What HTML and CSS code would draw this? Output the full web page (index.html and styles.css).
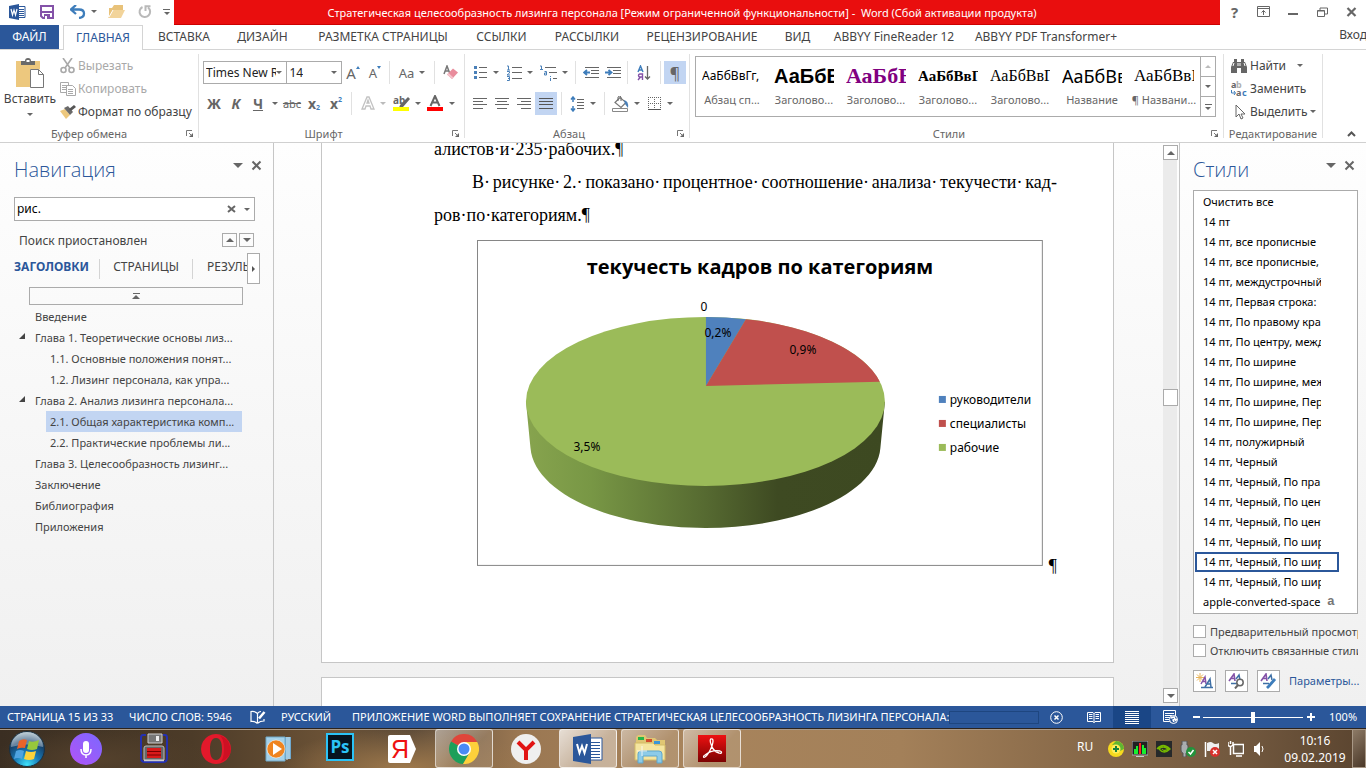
FILE: index.html
```html
<!DOCTYPE html>
<html lang="ru">
<head>
<meta charset="utf-8">
<title>Word</title>
<link rel="stylesheet" href="styles.css">
</head>
<body>
<header class="titlebar">
  <div class="qat">
    <button class="q-word" aria-label="Word"><svg width="17" height="16" viewBox="0 0 17 16"><path d="M9 2.500h7v11H9z" fill="#fff" stroke="#2b579a"/><path d="M10 5.500h5M10 7.500h5M10 9.500h5M10 11.500h5" stroke="#2b579a"/><path d="M0 2l10-2v16L0 14z" fill="#2b579a"/><path d="M2 5l1.500 6L5 6l1.500 5L8 5" fill="none" stroke="#fff" stroke-width="1.200"/></svg></button>
    <button class="q-save" aria-label="Сохранить"><svg width="14" height="14" viewBox="0 0 14 14"><path d="M1 1h12v12H3l-2-2z" fill="#fff" stroke="#8452a8" stroke-width="2"/><path d="M1 7h12" stroke="#8452a8" stroke-width="2"/><path d="M4 9h6v5H4z" fill="#8452a8"/><path d="M5 11h2v3H5z" fill="#fff"/></svg></button>
    <button class="q-undo" aria-label="Отменить"><svg width="16" height="14" viewBox="0 0 16 14"><path d="M6 0L1 4.500 6 9M1.500 4.500H9q5 0 5 4t-5 4.500" fill="none" stroke="#3e7dbb" stroke-width="2.300"/></svg><i class="caret"></i></button>
    <button class="q-open" aria-label="Открыть"><svg width="17" height="13" viewBox="0 0 17 13"><path d="M1 12V3h3l2-3h9v5H6z" fill="#e8c27a"/><path d="M5 5h12l-4 8H0z" fill="#f2d49b"/><path d="M5 5L1 12" stroke="#fff"/></svg></button>
    <button class="q-redo" aria-label="Повторить"><svg width="14" height="14" viewBox="0 0 14 14"><path d="M4.500 2A5.300 5.300 0 1 0 10 2.500M7.500 6V1.200h5" fill="none" stroke="#b9b9b9" stroke-width="2"/></svg></button>
    <button class="q-more" aria-label="Настройка панели"><i class="bar"></i><i class="caret"></i></button>
  </div>
  <h1 class="title">Стратегическая целесообразность лизинга персонала [Режим ограниченной функциональности] -&nbsp; Word (Сбой активации продукта)</h1>
  <div class="winbtns">
    <button class="help" aria-label="Справка">?</button>
    <button aria-label="Параметры ленты"><svg width="13" height="11" viewBox="0 0 13 11"><path d="M.5.500h12v10H.5zM.5 2.500h12" fill="none" stroke="#666"/><path d="M6.500 9V4.500M4.500 6.500l2-2 2 2" fill="none" stroke="#666"/></svg></button>
    <button aria-label="Свернуть"><svg width="10" height="11" viewBox="0 0 10 11"><path d="M0 7h10v2H0z" fill="#666"/></svg></button>
    <button aria-label="Восстановить"><svg width="11" height="10" viewBox="0 0 11 10"><path d="M3 3V1h7.500v6H8M.5 3.500h7v6h-7zM.5 4h7" fill="none" stroke="#666"/></svg></button>
    <button aria-label="Закрыть"><svg width="11" height="10" viewBox="0 0 11 10"><path d="M1.500 1l8 8M9.500 1l-8 8" stroke="#666" stroke-width="2.200"/></svg></button>
  </div>
</header>
<nav class="tabs">
  <button class="file">ФАЙЛ</button><button class="active">ГЛАВНАЯ</button><button>ВСТАВКА</button><button>ДИЗАЙН</button><button>РАЗМЕТКА СТРАНИЦЫ</button><button>ССЫЛКИ</button><button>РАССЫЛКИ</button><button>РЕЦЕНЗИРОВАНИЕ</button><button>ВИД</button><button>ABBYY FineReader 12</button><button>ABBYY PDF Transformer+</button><button class="login">Вход</button>
</nav>
<section class="ribbon">
  <div class="group g-clip">
    <div class="body">
      <button class="paste"><svg width="29" height="30" viewBox="0 0 29 30"><path d="M0 3h24v26H0z" fill="#edc87e"/><path d="M5 7V3h4q0-3 3-3t3 3h4v4z" fill="#6a6a6a"/><path d="M10.500 2h3v2h-3z" fill="#fff"/><path d="M14 11h9l6 6v13H14z" fill="#fff"/><path d="M14.500 11.500h8l5 5v13h-13zM22.500 11.500v5h5" fill="#fff" stroke="#777"/></svg><span>Вставить</span><i class="caret"></i></button>
      <div class="stack">
        <button class="off"><svg width="16" height="16" viewBox="0 0 16 16"><g fill="none" stroke="#a9a9a9" stroke-width="1.600"><path d="M3 0l7 10M12 0L5 10"/><circle cx="3.500" cy="12" r="2.500"/><circle cx="11.500" cy="12" r="2.500"/></g></svg>Вырезать</button>
        <button class="off"><svg width="16" height="16" viewBox="0 0 16 16"><g fill="#fff" stroke="#a9a9a9"><path d="M.5 1.500h8v10h-8zM2 4.500h5M2 6.500h5M2 8.500h5"/><path d="M6.500 4.500h6l3 3v7h-9zM8 8.500h5M8 10.500h5M8 12.500h5"/></g></svg>Копировать</button>
        <button><svg width="16" height="16" viewBox="0 0 16 16"><path d="M0 7l5-2 5 6-4 4z" fill="#edc87e"/><path d="M4 4l4-2 5 6-3 3z" fill="#6a6a6a"/><path d="M9 5l5-4 2 2-5 4z" fill="#555"/></svg>Формат по образцу</button>
      </div>
    </div>
    <div class="label"><span>Буфер обмена</span><button class="launch" aria-label="Буфер обмена"><svg width="8" height="8" viewBox="0 0 8 8"><path d="M.5 6V.500H6" fill="none" stroke="#777"/><path d="M7 3v4H3z" fill="#666"/><path d="M3 3l3 3" stroke="#777"/></svg></button></div>
  </div>
  <div class="group g-font">
    <div class="body rows">
      <div class="row">
        <button class="combo name" aria-label="Шрифт"><span>Times New Roman</span><i class="caret"></i></button>
        <button class="combo size" aria-label="Размер"><span>14</span><i class="caret"></i></button>
        <button class="ib" aria-label="Увеличить размер"><span class="grow">A</span><i class="tri up"></i></button>
        <button class="ib" aria-label="Уменьшить размер"><span class="shrink">A</span><i class="tri"></i></button>
        <i class="sep"></i>
        <button class="ib w38" aria-label="Регистр"><span class="aa">Aa</span><i class="caret"></i></button>
        <i class="sep"></i>
        <button class="ib w26" aria-label="Очистить формат"><svg width="16" height="15" viewBox="0 0 16 15"><path d="M1 9l3-8 3 8M2 6h4" fill="none" stroke="#777" stroke-width="1.500"/><path d="M4 9.500l6-6 5 4-6 6.500z" fill="#e98c9c"/><path d="M4 9.500l1.500-1.500 5 4.500L9 14z" fill="#f4c3cb"/></svg></button>
      </div>
      <div class="row r2">
        <button class="ib bold">Ж</button><button class="ib bold ital">К</button><button class="ib bold under">Ч</button><button class="ib w12" aria-label="Подчеркивание"><i class="caret"></i></button>
        <button class="ib strike">abc</button><button class="ib bold">x<sub>2</sub></button><button class="ib bold">x<sup>2</sup></button>
        <i class="sep sp4"></i>
        <button class="ib w34" aria-label="Эффекты"><svg width="14" height="15" viewBox="0 0 14 15"><path d="M1 13L6 1h2l5 12h-3L9 10H5l-1 3zM6 7h2L7 4z" fill="#fff" stroke="#c2c2c2" stroke-width="1.300"/></svg><i class="caret pale"></i></button>
        <button class="ib w34" aria-label="Выделение"><svg width="17" height="17" viewBox="0 0 17 17"><text x="0" y="9" class="ab">ab</text><path d="M15 2l2 2-7 8-4 1 1-3z" fill="#666"/><path d="M0 12h16v4H0z" fill="#ff0"/></svg><i class="caret"></i></button>
        <button class="ib w34" aria-label="Цвет текста"><svg width="17" height="17" viewBox="0 0 17 17"><path d="M3.500 11L8 1l4.500 10M5 7.500h6" fill="none" stroke="#666" stroke-width="2"/><path d="M0 12h16v4H0z" fill="#f00"/></svg><i class="caret"></i></button>
      </div>
    </div>
    <div class="label"><span>Шрифт</span><button class="launch" aria-label="Шрифт"><svg width="8" height="8" viewBox="0 0 8 8"><path d="M.5 6V.500H6" fill="none" stroke="#777"/><path d="M7 3v4H3z" fill="#666"/><path d="M3 3l3 3" stroke="#777"/></svg></button></div>
  </div>
  <div class="group g-par">
    <div class="body rows">
      <div class="row">
        <button class="ib w34" aria-label="Маркеры"><svg width="14" height="15" viewBox="0 0 14 15"><path d="M5 2.500h8M5 7.500h8M5 12.500h8" stroke="#666"/><path d="M0 1h3v3H0zM0 6h3v3H0zM0 11h3v3H0z" fill="#4a80b8"/></svg><i class="caret"></i></button>
        <button class="ib w34" aria-label="Нумерация"><svg width="15" height="16" viewBox="0 0 15 16"><path d="M5 2.500h10M5 7.500h10M5 13.500h10" stroke="#666"/><path d="M0 1h1.500v4M0 5h3M0 6.500h2.500v1.500L0 10h3M0 11.500h2.500v4H0M1 13.500h1" fill="none" stroke="#4a80b8"/></svg><i class="caret"></i></button>
        <button class="ib w34" aria-label="Многоуровневый список"><svg width="17" height="16" viewBox="0 0 17 16"><path d="M5 2.500h11M9 7.500h8M13 13.500h4" stroke="#666"/><path d="M0 1h1.500v4M0 4.500h3M4.500 6.500h2v3.500h-2v-2h2M10.500 11v1M10.500 13v3" fill="none" stroke="#4a80b8"/></svg><i class="caret"></i></button>
        <i class="sep sp4"></i>
        <button class="ib" aria-label="Уменьшить отступ"><svg width="16" height="12" viewBox="0 0 16 12"><path d="M2 .5h14M8 3.500h8M8 6.500h8M2 10.500h14" stroke="#666"/><path d="M7 5.500H2M4 3L1 5.500 4 8" fill="none" stroke="#3e7dbb" stroke-width="1.800"/></svg></button>
        <button class="ib" aria-label="Увеличить отступ"><svg width="16" height="12" viewBox="0 0 16 12"><path d="M2 .5h14M8 3.500h8M8 6.500h8M2 10.500h14" stroke="#666"/><path d="M0 5.500h5M3.500 3l3 2.500-3 2.500" fill="none" stroke="#3e7dbb" stroke-width="1.800"/></svg></button>
        <i class="sep"></i>
        <button class="ib w26" aria-label="Сортировка"><svg width="14" height="16" viewBox="0 0 14 16"><path d="M1 7l2.500-6L6 7M2 5h3" fill="none" stroke="#3e7dbb" stroke-width="1.400"/><path d="M5.500 15V9H3q-1.500 0-1.500 1.500T3 12h2.500M3.500 12L1 15" fill="none" stroke="#8452a8" stroke-width="1.400"/><path d="M10.500 1v13M8 11.500l2.500 2.500 2.500-2.500" fill="none" stroke="#666" stroke-width="1.300"/></svg></button>
        <i class="sep"></i>
        <button class="ib on pil" aria-label="Знаки">¶</button>
      </div>
      <div class="row r2">
        <button class="ib" aria-label="По левому краю"><svg width="15" height="12" viewBox="0 0 15 12"><path d="M0 .5h14M0 3.500h10M0 6.500h14M0 10.500h10" stroke="#666"/></svg></button>
        <button class="ib" aria-label="По центру"><svg width="15" height="12" viewBox="0 0 15 12"><path d="M0 .5h14M2 3.500h10M0 6.500h14M2 10.500h10" stroke="#666"/></svg></button>
        <button class="ib" aria-label="По правому краю"><svg width="15" height="12" viewBox="0 0 15 12"><path d="M0 .5h14M4 3.500h10M0 6.500h14M4 10.500h10" stroke="#666"/></svg></button>
        <button class="ib on" aria-label="По ширине"><svg width="15" height="12" viewBox="0 0 15 12"><path d="M0 .5h14M0 3.500h14M0 6.500h14M0 10.500h14" stroke="#555"/></svg></button>
        <i class="sep sp4"></i>
        <button class="ib w34" aria-label="Интервал"><svg width="15" height="16" viewBox="0 0 15 16"><path d="M7 3.500h7M7 6.500h7M7 9.500h7M7 12.500h7" stroke="#666"/><path d="M3 1v5M1 3.500L3 1l2 2.500M3 15v-5M1 12.500L3 15l2-2.500" fill="none" stroke="#3e7dbb" stroke-width="1.500"/></svg><i class="caret"></i></button>
        <i class="sep sp4"></i>
        <button class="ib w34" aria-label="Заливка"><svg width="17" height="16" viewBox="0 0 17 16"><path d="M.5 12.500h15v3H.5z" fill="#fff" stroke="#888"/><path d="M3 6.500l5-5 6 5-5 5z" fill="#fff" stroke="#777" stroke-width="1.200"/><path d="M6 5V1q2-2 3 0v4" fill="none" stroke="#666"/><path d="M12 4q5 1 4 8l-3-4z" fill="#4a80b8"/></svg><i class="caret"></i></button>
        <button class="ib w34" aria-label="Границы"><svg width="14" height="14" viewBox="0 0 14 14"><path d="M.5 0v13M12.500 0v13M6.500 0v13M0 .5h13M0 6.500h13" fill="none" stroke="#666" stroke-dasharray="1 1"/><path d="M0 12.500h13" stroke="#555"/></svg><i class="caret"></i></button>
      </div>
    </div>
    <div class="label"><span>Абзац</span><button class="launch" aria-label="Абзац"><svg width="8" height="8" viewBox="0 0 8 8"><path d="M.5 6V.500H6" fill="none" stroke="#777"/><path d="M7 3v4H3z" fill="#666"/><path d="M3 3l3 3" stroke="#777"/></svg></button></div>
  </div>
  <div class="group g-styles">
    <div class="body">
      <div class="gallery">
        <button><b class="s1">АаБбВвГг,</b><span>Абзац сп...</span></button>
        <button><b class="s2">АаБбВ</b><span>Заголово...</span></button>
        <button><b class="s3">АаБбВ</b><span>Заголово...</span></button>
        <button><b class="s4">АаБбВвГ</b><span>Заголово...</span></button>
        <button><b class="s5">АаБбВвГ</b><span>Заголово...</span></button>
        <button><b class="s6">АаБбВв</b><span>Название</span></button>
        <button><b class="s7">АаБбВвГ</b><span>¶ Названи...</span></button>
        <div class="gscroll"><button aria-label="Вверх"><i class="caret up pale"></i></button><button aria-label="Вниз"><i class="caret"></i></button><button aria-label="Еще"><i class="bar"></i><i class="caret"></i></button></div>
      </div>
    </div>
    <div class="label"><span>Стили</span><button class="launch" aria-label="Стили"><svg width="8" height="8" viewBox="0 0 8 8"><path d="M.5 6V.500H6" fill="none" stroke="#777"/><path d="M7 3v4H3z" fill="#666"/><path d="M3 3l3 3" stroke="#777"/></svg></button></div>
  </div>
  <div class="group g-edit">
    <div class="body stack">
      <button><svg width="16" height="14" viewBox="0 0 16 14"><path d="M2 3h1V0h3v3h4V0h3v3h1l2 5v6h-6V9H6v5H0V8z" fill="#666"/><path d="M7 4v3M9 4v3M3 4L2 7M13 4l1 3" stroke="#fff"/></svg>Найти<i class="caret far"></i></button>
      <button><svg width="16" height="16" viewBox="0 0 16 16"><text x="0" y="7" class="rep">a</text><text x="5" y="7" class="rep lt">b</text><text x="5" y="15" class="rep">a</text><text x="11" y="15" class="rep bl">c</text><path d="M.5 9v3H4M3 10l1.500 2L3 14" fill="none" stroke="#3e7dbb"/></svg>Заменить</button>
      <button><svg width="16" height="16" viewBox="0 0 16 16"><path d="M5 1v12l3-3 2 5 2-1-2-4h4z" fill="#fff" stroke="#666"/></svg>Выделить<i class="caret"></i></button>
    </div>
    <div class="label"><span>Редактирование</span></div>
  </div>
  <button class="collapse" aria-label="Свернуть ленту"><svg width="9" height="6" viewBox="0 0 9 6"><path d="M1 5l3.500-3.500L8 5" fill="none" stroke="#555" stroke-width="2"/></svg></button>
</section>
<main class="work">
  <aside class="nav">
    <div class="phead"><h2>Навигация</h2><button aria-label="Параметры"><i class="caret big"></i></button><button aria-label="Закрыть"><svg width="11" height="11" viewBox="0 0 11 11"><path d="M1.500 1.500l8 8M9.500 1.500l-8 8" stroke="#666" stroke-width="2"/></svg></button></div>
    <div class="search"><input type="text" value="рис." aria-label="Поиск"><button aria-label="Очистить"><svg width="9" height="8" viewBox="0 0 9 8"><path d="M1 1l7 6M8 1L1 7" stroke="#666" stroke-width="2"/></svg></button><button class="drop" aria-label="Меню"><i class="caret"></i></button></div>
    <div class="found"><span>Поиск приостановлен</span><button aria-label="Назад"><i class="caret up big"></i></button><button aria-label="Вперед"><i class="caret down"></i></button></div>
    <div class="ntabs"><button class="cur">ЗАГОЛОВКИ</button><button>СТРАНИЦЫ</button><button class="cut">РЕЗУЛЬТАТЫ</button><button class="more" aria-label="Далее"><i></i></button></div>
    <button class="totop" aria-label="В начало"><i class="bar"></i><i class="caret up big"></i></button>
    <ul class="tree">
      <li><a href="#">Введение</a></li>
      <li class="open"><a href="#">Глава 1. Теоретические основы лиз...</a></li>
      <li class="sub"><a href="#">1.1. Основные положения понят...</a></li>
      <li class="sub"><a href="#">1.2. Лизинг персонала, как упра...</a></li>
      <li class="open"><a href="#">Глава 2. Анализ лизинга персонала...</a></li>
      <li class="sub sel"><a href="#">2.1. Общая характеристика комп...</a></li>
      <li class="sub"><a href="#">2.2. Практические проблемы ли...</a></li>
      <li><a href="#">Глава 3. Целесообразность лизинг...</a></li>
      <li><a href="#">Заключение</a></li>
      <li><a href="#">Библиография</a></li>
      <li><a href="#">Приложения</a></li>
    </ul>
  </aside>
  <section class="canvas">
    <article class="page">
      <p>алистов·и·235·рабочих.¶</p>
      <p class="just"><span>В·</span><span>рисунке·</span><span>2.·</span><span>показано·</span><span>процентное·</span><span>соотношение·</span><span>анализа·</span><span>текучести·</span><span>кад-</span></p>
      <p>ров·по·категориям.¶</p>
      <div class="figure">
        <svg class="chart" viewBox="0 0 566 326" role="img" aria-label="текучесть кадров по категориям">
          <defs><linearGradient id="side"><stop offset="0" stop-color="#87a44e"/><stop offset=".18" stop-color="#789745"/><stop offset=".5" stop-color="#566a31"/><stop offset=".7" stop-color="#3e4a22"/><stop offset="1" stop-color="#3d4921"/></linearGradient></defs>
          <rect x=".5" y=".5" width="565" height="325" fill="#fff" stroke="#868686"/>
          <text x="283" y="34" class="ct">текучесть кадров по категориям</text>
          <path d="M49 162L53.500 208C57 252 133 288 228.500 288S400 252 403.500 208L408 162z" fill="url(#side)"/>
          <ellipse cx="228.500" cy="161.500" rx="179.500" ry="84.500" fill="#9bbb59"/>
          <path d="M229 146V77A179.500 84.500 0 0 1 269 79.200z" fill="#4f81bd"/>
          <path d="M229 146L269 79.200A179.500 84.500 0 0 1 403 141.700z" fill="#c0504d"/>
          <text x="227" y="71" class="cl">0</text><text x="241" y="97" class="cl">0,2%</text><text x="326" y="114" class="cl">0,9%</text><text x="110" y="211" class="cl">3,5%</text>
          <path d="M462 156h7v7h-7z" fill="#4f81bd"/><path d="M462 180h7v7h-7z" fill="#c0504d"/><path d="M462 204h7v7h-7z" fill="#9bbb59"/>
          <text x="473" y="164" class="cg">руководители</text><text x="473" y="188" class="cg">специалисты</text><text x="473" y="212" class="cg">рабочие</text>
        </svg><span>¶</span>
      </div>
    </article>
    <article class="page next"></article>
  </section>
  <div class="vscroll"><button aria-label="Вверх"><i class="caret up big"></i></button><div class="track"><div class="thumb"></div></div><button aria-label="Вниз"><i class="caret down"></i></button></div>
  <aside class="styles">
    <div class="phead"><h2>Стили</h2><button aria-label="Параметры"><i class="caret big"></i></button><button aria-label="Закрыть"><svg width="11" height="11" viewBox="0 0 11 11"><path d="M1.500 1.500l8 8M9.500 1.500l-8 8" stroke="#666" stroke-width="2"/></svg></button></div>
    <ul class="slist">
      <li><span>Очистить все</span></li><li><span>14 пт</span></li><li><span>14 пт, все прописные</span></li><li><span>14 пт, все прописные,</span></li><li><span>14 пт, междустрочный</span></li><li><span>14 пт, Первая строка:</span></li><li><span>14 пт, По правому краю</span></li><li><span>14 пт, По центру, между</span></li><li><span>14 пт, По ширине</span></li><li><span>14 пт, По ширине, между</span></li><li><span>14 пт, По ширине, Перв</span></li><li><span>14 пт, По ширине, Перв</span></li><li><span>14 пт, полужирный</span></li><li><span>14 пт, Черный</span></li><li><span>14 пт, Черный, По прав</span></li><li><span>14 пт, Черный, По центру</span></li><li><span>14 пт, Черный, По центру</span></li><li><span>14 пт, Черный, По шири</span></li><li class="sel"><span>14 пт, Черный, По шири</span></li><li><span>14 пт, Черный, По шири</span></li><li><span>apple-converted-space</span><b>a</b></li>
    </ul>
    <label class="chk"><input type="checkbox"><span>Предварительный просмотр</span></label>
    <label class="chk"><input type="checkbox"><span>Отключить связанные стили</span></label>
    <div class="sbtns">
      <button aria-label="Создать стиль"><svg width="17" height="16" viewBox="0 0 17 16"><path d="M4 0v9M0 4.500h8M1 1.500l6 6M7 1.500l-6 6" stroke="#e8b45a"/><path d="M5 11l4-7 1 7M6.500 8.500h3" fill="none" stroke="#8452a8" stroke-width="1.500"/><path d="M9 14l5-8 1 8M11 11h4M5 14.500h12" fill="none" stroke="#3e6fa5" stroke-width="1.500"/></svg></button>
      <button aria-label="Инспектор стилей"><svg width="17" height="16" viewBox="0 0 17 16"><path d="M1 8l5-7 1 7M3 5.500h4" fill="none" stroke="#8452a8" stroke-width="1.600"/><path d="M8 6l3-4 1 5M3 10.500h6" fill="none" stroke="#3e6fa5" stroke-width="1.500"/><circle cx="12" cy="9.500" r="3.200" fill="#fff" stroke="#666" stroke-width="1.500"/><path d="M10 12l-3 3.500" stroke="#666" stroke-width="2"/></svg></button>
      <button aria-label="Управление стилями"><svg width="17" height="16" viewBox="0 0 17 16"><path d="M1 8l5-7 1 7M3 5.500h4" fill="none" stroke="#8452a8" stroke-width="1.600"/><path d="M8 6l3-4 1 5M3 10.500h6" fill="none" stroke="#3e6fa5" stroke-width="1.500"/><path d="M15 6l-6 7-2 2" stroke="#3e7dbb" stroke-width="2.800"/></svg></button>
      <a href="#">Параметры...</a>
    </div>
  </aside>
</main>
<footer class="status">
  <span class="st1">СТРАНИЦА 15 ИЗ 33</span><span class="st2">ЧИСЛО СЛОВ: 5946</span>
  <svg class="st3" width="16" height="14" viewBox="0 0 16 14"><path d="M7.500 3.500Q5 1 1 1.500v10q4-.5 6.500 2M7.500 3.500v10M7.500 3.500Q9 1.500 11 1.500M8 13q2-2 6-2V9" fill="none" stroke="#fff" stroke-width="1.200"/><path d="M14.500 2L9 8.500" stroke="#fff" stroke-width="2.500"/></svg>
  <span class="st4">РУССКИЙ</span><span class="st5">ПРИЛОЖЕНИЕ WORD ВЫПОЛНЯЕТ СОХРАНЕНИЕ СТРАТЕГИЧЕСКАЯ ЦЕЛЕСООБРАЗНОСТЬ ЛИЗИНГА ПЕРСОНАЛА:</span>
  <i class="prog"></i>
  <button class="cancel" aria-label="Отмена"><svg width="13" height="13" viewBox="0 0 13 13"><circle cx="6.500" cy="6.500" r="5.800" fill="none" stroke="#fff"/><path d="M4.500 4.500l4 4M8.500 4.500l-4 4" stroke="#fff" stroke-width="1.500"/></svg></button>
  <span class="grow1"></span>
  <button class="view" aria-label="Чтение"><svg width="14" height="13" viewBox="0 0 14 13"><path d="M.5 1.500h5.500l1 1 1-1h5.500v9H8l-1 1-1-1H.5zM7 2v10M2 3.500h3.500M2 5.500h3.500M2 7.500h3.500M8.500 3.500H12M8.500 5.500H12M8.500 7.500H12" fill="none" stroke="#fff"/></svg></button>
  <button class="view cur" aria-label="Разметка"><svg width="14" height="13" viewBox="0 0 14 13"><path d="M0 .5h14M0 2.500h14M0 4.500h14M0 6.500h14M0 8.500h14M0 10.500h14M0 12.500h14" stroke="#fff"/></svg></button>
  <button class="view" aria-label="Веб"><svg width="15" height="14" viewBox="0 0 15 14"><path d="M12.500 6V.500H.5v11H7M2 3.500h9M2 5.500h7M2 7.500h5M2 9.500h4" fill="none" stroke="#fff"/><circle cx="10.500" cy="9.500" r="4" fill="#2b579a" stroke="#fff"/><path d="M8 8l3-1 1 2-2 1 1 2M12 11l2-2" fill="none" stroke="#fff" stroke-width="1.500"/></svg></button>
  <button class="zb" aria-label="Уменьшить"><svg width="7" height="8" viewBox="0 0 7 8"><path d="M0 4h7" stroke="#fff" stroke-width="2"/></svg></button>
  <input class="zoom" type="range" value="50" aria-label="Масштаб">
  <button class="zb" aria-label="Увеличить"><svg width="8" height="8" viewBox="0 0 8 8"><path d="M0 4h8M4 0v8" stroke="#fff" stroke-width="2"/></svg></button>
  <span class="pct">100%</span>
</footer>
<footer class="taskbar">
  <button class="start" aria-label="Пуск"><svg width="38" height="38" viewBox="0 0 38 38"><defs><radialGradient id="orb" cx=".5" cy=".95" r=".9"><stop offset="0" stop-color="#3fe3fb"/><stop offset=".4" stop-color="#1979b5"/><stop offset=".75" stop-color="#15416b"/><stop offset="1" stop-color="#8fa9b8"/></radialGradient></defs><circle cx="19" cy="19" r="17.500" fill="url(#orb)" stroke="#1a3040"/><path d="M3 17A16 15 0 0 1 35 17Q19 12 3 17z" fill="#fff" opacity=".35"/><path d="M11 11q4-3 8-1l-2 8q-4-1-8 1z" fill="#e8632a"/><path d="M21 11q4 2 10-1l-2 9q-5 2-10 0z" fill="#97c83c"/><path d="M8 21q4-2 8 0l-2 8q-4-2-8 0z" fill="#4ea3e0"/><path d="M18 21q5 2 10 0l-2 8q-5 2-10 0z" fill="#fcd23a"/></svg></button>
  <button class="voice" aria-label="Алиса"><svg width="32" height="32" viewBox="0 0 32 32"><defs><linearGradient id="al" x1="0" y1="1" x2="1" y2="0"><stop offset="0" stop-color="#b253f5"/><stop offset="1" stop-color="#7b68ff"/></linearGradient></defs><circle cx="16" cy="16" r="16" fill="url(#al)"/><rect x="13" y="8" width="6" height="12" rx="3" fill="#fff"/><path d="M11 16q0 6 5 6t5-6M16 22v3" fill="none" stroke="#fff" stroke-width="1.500"/></svg></button>
  <button class="tb" aria-label="Дискета"><svg width="30" height="32" viewBox="0 0 30 32"><path d="M7 2H4Q2 2 2 5v20q0 4 4 4h18q4 0 4-4V5q0-3-2-3h-2" fill="none" stroke="#2430b0" stroke-width="2"/><path d="M9 1h14v9H9z" fill="#777" stroke="#ccc"/><path d="M17 3h3v5h-3z" fill="#eee"/><path d="M5 15q0-2 2-2h16q2 0 2 2v12H5z" fill="#666" stroke="#bbb"/><path d="M8 15h14v10H8z" fill="#d91a1a"/><path d="M8 18.500h14M8 22h14" stroke="#700"/><path d="M5 27.500h20" stroke="#ccc" stroke-width="1.500"/></svg></button>
  <button class="tb" aria-label="Opera"><svg width="30" height="30" viewBox="0 0 30 30"><path fill-rule="evenodd" d="M15 0a15 15 0 1 0 .01 0zM15 4c5 0 6 6 6 11s-1 11-6 11-6-6-6-11 1-11 6-11z" fill="#e3192b"/><path d="M18 1q10 3 11.500 13T18 29q5-3 5-14T18 1z" fill="#a70014" opacity=".35"/></svg></button>
  <button class="tb" aria-label="Media Player"><svg width="27" height="26" viewBox="0 0 27 26"><path d="M5 1h21v22H5z" fill="#6fa9cf"/><path d="M22 1v23M24 1v22" stroke="#d4ecf8"/><path d="M1 1h19v24H1z" fill="#a5d2ea" stroke="#71a9c8"/><circle cx="11" cy="13" r="9" fill="#ef8420" stroke="#fff" stroke-opacity=".5"/><path d="M8 7l9 6-9 6z" fill="#fff"/></svg></button>
  <button class="tb up2" aria-label="Photoshop"><svg width="28" height="28" viewBox="0 0 28 28"><path d="M1 1h26v26H1z" fill="#06141f" stroke="#2bc3f6" stroke-width="2"/><text x="14" y="20" class="ps">Ps</text></svg></button>
  <button class="tb" aria-label="Яндекс"><svg width="28" height="28" viewBox="0 0 28 28"><path d="M2 0h20l6 14-6 14H2q-2 0-2-2V2Q0 0 2 0z" fill="#fff"/><text x="12" y="23" class="ya">Я</text></svg></button>
  <button class="tb run" aria-label="Chrome"><svg width="30" height="30" viewBox="0 0 30 30"><path d="M15 15L2 7.500A15 15 0 0 1 28 7.500z" fill="#e0453a"/><path d="M15 15L2 7.500A15 15 0 0 0 14 30l7-12z" fill="#1d9f5a"/><path d="M15 8h13.200A15 15 0 0 1 14 30l7-12z" fill="#fdd03b"/><circle cx="15" cy="15" r="7" fill="#fff"/><circle cx="15" cy="15" r="5.500" fill="#4a8af4"/></svg></button>
  <button class="tb" aria-label="Яндекс Браузер"><svg width="30" height="30" viewBox="0 0 30 30"><circle cx="15" cy="15" r="15" fill="#efefef"/><path d="M7 8l8 8 8-8M15 15v11" fill="none" stroke="#e11414" stroke-width="4"/></svg></button>
  <button class="tb run act" aria-label="Word"><svg width="31" height="30" viewBox="0 0 31 30"><path d="M15 4h14v22H15z" fill="#fff" stroke="#2b579a"/><path d="M18 8.500h9M18 11.500h9M18 14.500h9M18 17.500h9M18 20.500h9M18 23.500h9" stroke="#2b579a"/><path d="M0 3l18-3v30L0 27z" fill="#2b579a"/><path d="M4 10l2.500 9L9 12l2.500 7L14 10" fill="none" stroke="#fff" stroke-width="2"/></svg></button>
  <button class="tb run" aria-label="Проводник"><svg width="32" height="30" viewBox="0 0 32 30"><path d="M2 3l2-2h7l2 3h8l2 2h8v20H2z" fill="#e0c673"/><path d="M4 3h6v3H4z" fill="#29b548"/><path d="M12 5h6v3h-6z" fill="#d24c2c"/><path d="M20 7h6v3h-6z" fill="#3a96d8"/><path d="M1 9h18l2 2h10v15H1z" fill="#f5e5a0" stroke="#d3bb66"/><path d="M4 29V20q0-3 3-3h18q3 0 3 3v9h-5v-7H9v7z" fill="#8ccbe8" stroke="#5fa7cc"/><path d="M8 12v10M3 17h10" stroke="#fff" opacity=".8"/></svg></button>
  <button class="tb run" aria-label="Acrobat"><svg width="28" height="27" viewBox="0 0 28 27"><defs><linearGradient id="ac" x1="0" y1="0" x2="0" y2="1"><stop offset="0" stop-color="#ee1111"/><stop offset="1" stop-color="#7c0202"/></linearGradient></defs><path d="M0 0h28v27H0z" fill="url(#ac)"/><path d="M13 4c3-1 2 4 1 7-2 5-4 9-7 11-2 1-2-1 0-2 4-3 10-5 15-4 3 1 1 3-1 2-4-1-7-5-8-9-1-2-1-5 0-5z" fill="none" stroke="#fff" stroke-width="1.300"/></svg></button>
  <span class="grow1"></span>
  <span class="lang">RU</span>
  <div class="tray">
    <svg width="16" height="16" viewBox="0 0 16 16"><circle cx="8" cy="8" r="8" fill="#f6da1e"/><path d="M8 0a8 8 0 0 1 8 8l-4 2A6 6 0 0 0 4 4z" fill="#60b632"/><circle cx="8" cy="8" r="4.500" fill="#ffed5a"/><path d="M8 5v6M5 8h6" stroke="#17813a" stroke-width="2"/></svg>
    <svg width="16" height="16" viewBox="0 0 16 16"><path d="M0 0h16v14H0z" fill="#222" stroke="#aaa"/><path d="M2 13V8h2V5h2v8zM10 13V4h2v3h2v6z" fill="#19ef2d"/><path d="M7 2h2v11H7z" fill="#f22"/><path d="M4 15.500h8" stroke="#ccc"/></svg>
    <svg width="16" height="16" viewBox="0 0 16 16"><path d="M0 0h16v16H0z" fill="#26292a"/><path d="M1 8q6-7 13 0-6 6-11 0 4-4 9 0-4 3-6 0" fill="none" stroke="#76b900" stroke-width="1.300"/></svg>
    <svg width="16" height="16" viewBox="0 0 16 16"><path d="M2 0h5v4h1v5q-1 3-2 3v4H3v-4q-2 0-2-3V4h1z" fill="#a9adb0" stroke="#555"/><circle cx="11" cy="11" r="5" fill="#23933c"/><path d="M8.500 11l2 2 3-4" fill="none" stroke="#fff" stroke-width="1.500"/></svg>
    <svg width="16" height="16" viewBox="0 0 16 16"><path d="M1.500 16V1" stroke="#fff" stroke-width="1.500"/><path d="M3 2q4-2 6 0t6 0v8H3z" fill="#eee"/><circle cx="11" cy="11" r="5" fill="#d8312c"/><path d="M9 9l4 4M13 9l-4 4" stroke="#fff" stroke-width="1.500"/></svg>
    <svg width="16" height="16" viewBox="0 0 16 16"><path d="M5.500 3.500h10v9h-10z" fill="#6a5a48" stroke="#fff" stroke-width="1.500"/><path d="M8 15h6M2.500 6v8M0 1v3q2 3 5 0V1M2.500 0v3" fill="none" stroke="#fff" stroke-width="1.500"/></svg>
    <svg width="16" height="16" viewBox="0 0 16 16"><path d="M2 5h2l4-4v14l-4-4H2z" fill="#fff"/><path d="M10 5q2 3 0 6" fill="none" stroke="#fff"/></svg>
  </div>
  <time class="clock"><span>10:16</span><span>09.02.2019</span></time>
  <button class="desk" aria-label="Рабочий стол"></button>
</footer>
</body>
</html>
```
FILE: styles.css
```css
* { box-sizing: border-box; }
body { margin: 0; height: 100vh; display: flex; flex-direction: column; overflow: hidden; font: 12px/16px "Noto Sans", sans-serif; color: #444; background: #fff; }
button { font: inherit; color: inherit; background: none; border: 0; padding: 0; margin: 0; display: flex; align-items: center; justify-content: center; white-space: nowrap; }
svg { flex: none; display: block; }
h1, h2, p, ul { margin: 0; padding: 0; font-weight: normal; list-style: none; }
a { color: inherit; text-decoration: none; }
.caret { flex: none; width: 0; height: 0; border: 3px solid transparent; border-top-color: #666; border-bottom: 0; }
.caret.up { border-top: 0; border-bottom: 3px solid #666; }
.caret.big { border-left-width: 5px; border-right-width: 5px; border-top-width: 5px; }
.caret.down { border-left-width: 4px; border-right-width: 4px; border-top-width: 4px; }
.caret.up.big { border-left-width: 4px; border-right-width: 4px; border-top-width: 0; border-bottom-width: 4px; }
.caret.pale { border-top-color: #bbb; border-bottom-color: #bbb; }
.bar { width: 7px; height: 1px; background: #666; margin-bottom: 2px; }
.grow1 { flex: 1; }

.titlebar { display: flex; height: 25px; flex: none; }
.qat { display: flex; width: 174px; padding-bottom: 2px; }
.q-word { width: 35px; }
.q-save { width: 24px; }
.q-undo { width: 40px; gap: 5px; margin-left: 4px; }
.q-open { width: 27px; }
.q-redo { width: 29px; }
.q-more { width: 15px; flex-direction: column; }
.title { flex: 1; min-width: 0; background: #e90e0e; border-bottom: 1px solid #c00; color: #fff; font-size: 11px; line-height: 26px; text-align: center; white-space: nowrap; overflow: hidden; padding-right: 30px; }
.winbtns { display: flex; width: 146px; padding-bottom: 2px; }
.winbtns button { flex: 1; }
.winbtns .help { font-size: 15px; font-weight: 700; color: #666; }

.tabs { flex: none; height: 25px; display: grid; grid-template-columns: 59px 88px 74px 83px 158px 79px 92px 138px 53px 140px 164px 1fr; border-bottom: 1px solid #d4d4d4; }
.tabs .file { background: #2b579a; color: #fff; }
.tabs .active { margin: 0 4px -1px; border: 1px solid #d4d4d4; border-bottom: 0; background: #fff; color: #2b579a; }
.tabs .login { justify-content: flex-end; padding-bottom: 4px; margin-right: -1px; }

.ribbon { flex: none; height: 93px; display: flex; border-bottom: 1px solid #d0d0d0; }
.group { display: flex; flex-direction: column; margin-top: 4px; padding-right: 1px; background: linear-gradient(#e1e1e1, #e1e1e1) right top / 1px 84px no-repeat; }
.group .body { flex: 1; min-height: 0; display: flex; }
.label { flex: none; display: flex; align-items: center; height: 17px; color: #666; font-size: 11px; }
.label span { flex: 1; text-align: center; padding-right: 8px; white-space: nowrap; }
.launch { margin-right: 4px; }
.g-clip { width: 199px; }
.g-font { width: 266px; padding-left: 4px; }
.g-par { width: 225px; padding-left: 4px; }
.g-styles { flex: 1; min-width: 0; padding-left: 5px; }
.g-edit { width: 99px; }
.paste { width: 60px; flex-direction: column; justify-content: flex-start; padding-top: 4px; color: #444; }
.paste span { margin: 3px 0 6px; line-height: 16px; }
.stack button { height: 23px; gap: 3px; justify-content: flex-start; }
.g-clip .stack button { gap: 2px; }
.off { color: #a9a9a9; }
.g-edit .stack { padding-left: 7px; flex-direction: column; }
.g-edit .label span { padding: 0; }
.far { margin-left: 8px; }
.group .rows { flex-direction: column; }
.row { display: flex; height: 23px; margin-top: 7px; align-items: center; }
.r2 { margin-top: 8px; }
.combo { height: 23px; border: 1px solid #ababab; color: #222; justify-content: space-between; padding: 0 4px 0 2px; }
.combo span { overflow: hidden; }
.combo.name { width: 85px; }
.combo.name span { width: 70px; text-align: left; }
.combo.size { width: 56px; margin-left: -1px; }
.ib { flex: none; width: 22px; height: 23px; gap: 5px; font-size: 14px; color: #666; }
.w12 { width: 12px; }
.w26 { width: 26px; }
.w34 { width: 34px; }
.w38 { width: 38px; }
.on { background: #c2d5f2; }
.sep { flex: none; width: 1px; height: 23px; background: #e1e1e1; margin: 0 3px; }
.sp4 { margin: 0 4px; }
.grow { font-size: 15px; }
.shrink, .aa { font-size: 13px; }
.tri { align-self: flex-start; width: 0; height: 0; border: 2px solid transparent; border-top: 3px solid #3e7dbb; margin: 5px 0 0 -5px; }
.tri.up { border-top: 0; border-bottom: 3px solid #3e7dbb; }
.bold { font-weight: 700; gap: 0; }
.ital { font-style: italic; }
.under { text-decoration: underline; }
.strike { font-size: 11px; text-decoration: line-through; }
.bold sub, .bold sup { font-size: 7px; line-height: 8px; color: #3e7dbb; }
.bold sub { align-self: flex-end; margin-bottom: 3px; }
.bold sup { align-self: flex-start; margin-top: 4px; }
.ab { font: 700 10px "Noto Sans", sans-serif; fill: #666; }
.rep { font: 700 9px "Noto Sans", sans-serif; fill: #666; }
.rep.lt { fill: #b0b0b0; }
.rep.bl { fill: #3e7dbb; }
.pil { font-size: 16px; }
.gallery { flex: 1; min-width: 0; height: 61px; margin: 2px 7px 0 0; border: 1px solid #ababab; display: flex; }
.gallery > button { flex: 1; min-width: 0; flex-direction: column; padding: 0 6px; color: #666; font-size: 11px; }
.gallery b { width: 100%; height: 28px; line-height: 28px; font-weight: 400; overflow: hidden; text-align: left; color: #000; margin-top: 4px; }
.gallery span { line-height: 20px; height: 26px; }
.gallery .s1 { font-size: 12px; }
.gallery .s2 { font: 700 20px/28px "Liberation Sans", sans-serif; }
.gallery .s3 { font: 700 22px/28px "Liberation Serif", serif; color: #800080; }
.gallery .s4 { font: 700 15px/28px "Liberation Serif", serif; }
.gallery .s5 { font: 16px/28px "Liberation Serif", serif; }
.gallery .s6 { font-size: 18px; }
.gallery .s7 { font: 17px/28px "Liberation Serif", serif; }
.gscroll { width: 15px; border-left: 1px solid #ababab; display: flex; flex-direction: column; }
.gscroll button { flex: 1; flex-direction: column; border-top: 1px solid #ababab; }
.gscroll button:first-child { border: 0; }
.collapse { width: 43px; align-items: flex-end; padding: 0 0 5px 14px; }

.work { flex: 1; min-height: 0; display: flex; background: linear-gradient(#fefefe, #f0f0f0); }
.nav { width: 274px; border-right: 1px solid #c6c6c6; padding-left: 14px; }
.phead { display: flex; align-items: center; height: 47px; padding-top: 6px; }
.phead h2 { flex: 1; font: 300 20px/28px "Open Sans", sans-serif; color: #2b579a; }
.phead button { width: 18px; height: 20px; margin-top: -8px; }
.nav .phead { padding-right: 8px; margin-bottom: 7px; }
.search { display: flex; width: 241px; height: 24px; background: #fff; border: 1px solid #ababab; }
.search input { flex: 1; min-width: 0; border: 0; outline: 0; padding: 0 2px; font: inherit; color: #000; background: none; }
.search button { width: 18px; }
.search .drop { width: 14px; }
.found { display: flex; gap: 2px; width: 240px; margin-top: 12px; padding-left: 5px; }
.found span { flex: 1; }
.found button { width: 15px; height: 14px; border: 1px solid #ababab; }
.ntabs { display: flex; align-items: center; margin-top: 4px; height: 31px; width: 246px; }
.ntabs button { height: 20px; border-right: 1px solid #d4d4d4; width: 93px; padding-bottom: 3px; }
.ntabs .cur { font-weight: 700; color: #2b579a; width: 86px; justify-content: flex-start; }
.ntabs .cut { flex: 1; min-width: 0; border: 0; overflow: hidden; padding-left: 14px; justify-content: flex-start; }
.ntabs .more { width: 13px; height: 31px; border: 1px solid #ababab; background: #fff; padding: 0; }
.more i { border: 3px solid transparent; border-left-color: #555; border-right: 0; }
.totop { margin: 3px 0 1px 15px; width: 214px; height: 18px; border: 1px solid #ababab; flex-direction: column; }
.totop .bar { margin-bottom: 1px; }
.tree { font-size: 11px; }
.tree li { height: 21px; line-height: 21px; padding-left: 21px; white-space: nowrap; position: relative; }
.tree .sub { padding-left: 32px; }
.tree .sub a { display: block; width: 196px; padding-left: 4px; }
.tree .sel a { background: #c2d5f2; }
.open::before { content: ""; position: absolute; left: 5px; top: 6px; width: 0; height: 0; border-left: 6px solid transparent; border-bottom: 6px solid #444; }

.canvas { flex: 1; min-width: 0; padding: 0 49px 0 47px; display: flex; flex-direction: column; overflow: hidden; }
.page { background: #fff; border: 1px solid #c6c6c6; border-top: 0; height: 520px; flex: none; padding: 0 56px 0 112px; color: #000; font: 18px/33px "Liberation Serif", serif; }
.page p:first-child { margin-top: -10px; }
.next { margin-top: 14px; height: 80px; border-top: 1px solid #c6c6c6; }
.just { display: flex; justify-content: space-between; padding-left: 38px; }
.figure { display: flex; align-items: flex-end; margin: 8px 0 0 43px; gap: 6px; }
.figure span { line-height: 16px; margin-bottom: -8px; }
.chart { flex: 1; min-width: 0; }
.ct { font: 700 20px "Open Sans", sans-serif; text-anchor: middle; }
.cl { font: 12px "Noto Sans", sans-serif; text-anchor: middle; }
.cg { font: 12px "Noto Sans", sans-serif; }
.vscroll { width: 17px; display: flex; flex-direction: column; padding: 2px 2px 3px 0; border-right: 1px solid #c6c6c6; }
.vscroll button { height: 15px; width: 15px; border: 1px solid #ababab; background: #fff; }
.track { flex: 1; background: #ebebeb; display: flex; flex-direction: column; }
.track::before { content: ""; flex: 229; }
.track::after { content: ""; flex: 283; }
.thumb { width: 15px; height: 17px; border: 1px solid #ababab; background: #fff; }
.styles { width: 186px; padding: 0 8px 0 13px; }
.slist { height: 424px; background: #fff; border: 1px solid #ababab; padding: 1px 18px 0 1px; color: #000; font-size: 11px; }
.slist li { height: 20px; line-height: 16px; border: 2px solid transparent; padding-left: 6px; display: flex; }
.slist span { width: 118px; overflow: hidden; white-space: nowrap; }
.slist b { color: #777; font: 700 13px/16px "Liberation Mono", monospace; padding-left: 6px; }
.slist .sel { border-color: #2b579a; background: #fff; }
.chk { display: flex; align-items: center; gap: 4px; height: 19px; overflow: hidden; white-space: nowrap; font-size: 11px; }
.slist + .chk { margin-top: 8px; }
.chk input { appearance: none; flex: none; width: 13px; height: 13px; margin: 0; border: 1px solid #ababab; background: #fff; }
.sbtns { display: flex; align-items: center; gap: 9px; margin-top: 10px; }
.sbtns button { flex: none; width: 23px; height: 22px; border: 1px solid #ababab; background: #fff; }
.sbtns a { color: #2b579a; font-size: 11px; }

.status { flex: none; height: 22px; background: #2b579a; color: #fff; display: flex; align-items: center; white-space: nowrap; font-size: 11px; }
.status > * { flex: none; }
.status .grow1 { flex: 1; }
.st1 { width: 122px; padding-left: 7px; }
.st2 { width: 121px; padding-left: 7px; }
.st3 { margin-left: 7px; }
.st4 { width: 71px; margin-left: 15px; }
.st5 { min-width: 592px; }
.prog { width: 90px; height: 13px; border: 1px solid #1e4680; }
.cancel { width: 34px; }
.view { width: 38px; height: 22px; }
.view.cur { background: #1a4686; }
.zb { width: 14px; }
.zoom { appearance: none; width: 100px; height: 12px; margin: 0 1px 0 0; background: linear-gradient(#fff, #fff) center / 100% 1px no-repeat; }
.zoom::-webkit-slider-thumb { appearance: none; width: 4px; height: 11px; background: #fff; }
.pct { width: 48px; padding-left: 11px; }

.taskbar { flex: none; height: 40px; display: flex; align-items: center; border-top: 1px solid #2d231c; box-shadow: inset 0 1px #a99a8a; color: #fff;
 background: radial-gradient(ellipse 130px 40px at 405px 40px, #a07a4c, transparent), radial-gradient(ellipse 110px 30px at 100px 30px, #54412c, transparent), linear-gradient(90deg, #3a2e22, #4c3b28 14%, #6b5236 24%, #5d4b38 30%, #9a7752 38%, #a8845c 50%, #a38059 66%, #8a6b4a 78%, #6f563d 92%, #5a442f); }
.start { width: 54px; height: 39px; }
.voice { width: 64px; margin-right: 5px; }
.tb { width: 62px; height: 39px; }
.up2 { padding-bottom: 4px; }
.run { width: 58px; margin: 0 2px; border: 1px solid rgba(255,255,255,.6); border-radius: 3px; background: linear-gradient(135deg, rgba(255,255,255,.45), rgba(255,255,255,.12) 60%); }
.act { background: linear-gradient(135deg, rgba(255,255,255,.75), rgba(255,255,255,.4) 60%); }
.ps { font: 700 17px "Open Sans", sans-serif; fill: #2bc3f6; text-anchor: middle; }
.ya { font: 25px "Liberation Sans", sans-serif; fill: #e11; text-anchor: middle; }
.lang { width: 31px; padding-bottom: 4px; }
.tray { display: flex; gap: 8px; }
.clock { width: 66px; margin-left: 14px; display: flex; flex-direction: column; align-items: center; line-height: 17px; }
.desk { width: 14px; height: 39px; margin-left: 4px; border: 1px solid #a89886; background: linear-gradient(135deg, #8d7a66, #4a3828); }
```
